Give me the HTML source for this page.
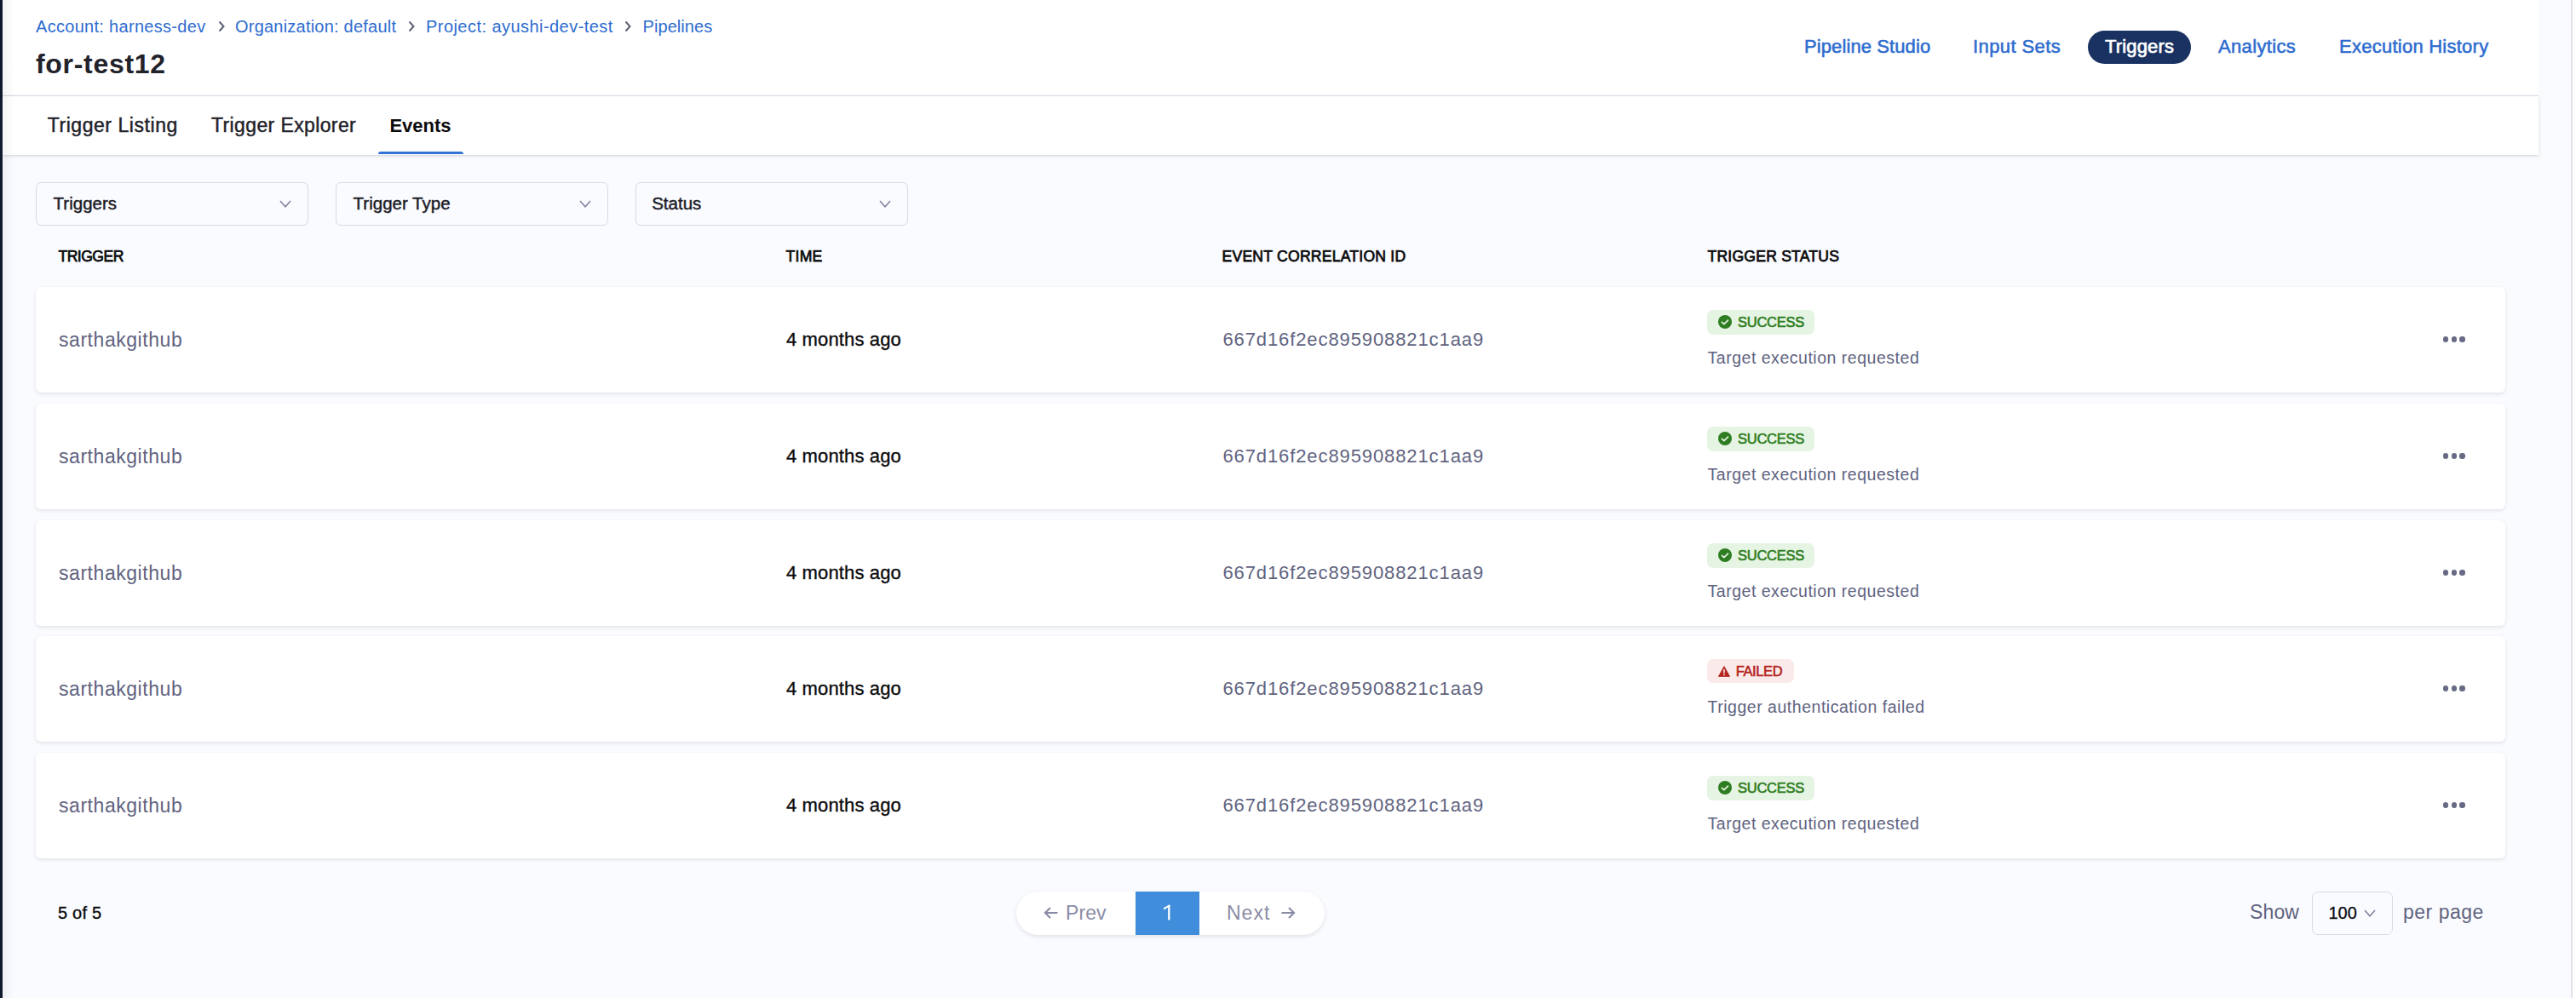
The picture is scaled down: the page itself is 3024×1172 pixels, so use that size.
<!DOCTYPE html>
<html><head><meta charset="utf-8"><title>Events</title>
<style>
html,body{margin:0;padding:0;width:3024px;height:1172px;overflow:hidden;background:#fafbfe;}
body{position:relative;font-family:"Liberation Sans", sans-serif;}
.t{position:absolute;white-space:nowrap;}
.r{position:absolute;}
</style></head><body>
<div class="r" style="left:0px;top:0px;width:3px;height:1172px;background:#0f1a2e;"></div>
<div class="r" style="left:3px;top:0px;width:3015px;height:1172px;background:#fafbfe;"></div>
<div class="r" style="left:3018px;top:0px;width:2px;height:1172px;background:#e1e1ea;"></div>
<div class="r" style="left:3020px;top:0px;width:4px;height:1172px;background:#ffffff;"></div>
<div class="r" style="left:3px;top:0px;width:2977px;height:112px;background:#ffffff;"></div>
<div class="r" style="left:3px;top:112px;width:2977px;height:1px;background:#dcdce8;"></div>
<div class="r" style="left:3px;top:113px;width:2977px;height:69px;background:#ffffff;box-shadow:0 0.5px 1px rgba(40,41,61,0.05), 0 1px 4px rgba(96,97,112,0.2);"></div>
<div class="r" style="left:3px;top:0px;width:14px;height:1172px;background:linear-gradient(90deg, rgba(0,0,0,0.045), rgba(0,0,0,0));"></div>
<div class="t" style="left:42.0px;top:21.1px;font-size:20px;line-height:20px;color:#2e6ccf;letter-spacing:0.3px;">Account: harness-dev</div>
<div class="t" style="left:276.0px;top:21.1px;font-size:20px;line-height:20px;color:#2e6ccf;letter-spacing:0.22px;">Organization: default</div>
<div class="t" style="left:500.0px;top:21.1px;font-size:20px;line-height:20px;color:#2e6ccf;letter-spacing:0.45px;">Project: ayushi-dev-test</div>
<div class="t" style="left:754.6px;top:21.1px;font-size:20px;line-height:20px;color:#2e6ccf;letter-spacing:0.05px;">Pipelines</div>
<svg class="r" style="left:256.3px;top:24.3px" width="8" height="14" viewBox="0 0 8 14"><path d="M1.5 1.5 L6.5 7 L1.5 12.5" fill="none" stroke="#5c6175" stroke-width="2"/></svg>
<svg class="r" style="left:479.3px;top:24.3px" width="8" height="14" viewBox="0 0 8 14"><path d="M1.5 1.5 L6.5 7 L1.5 12.5" fill="none" stroke="#5c6175" stroke-width="2"/></svg>
<svg class="r" style="left:733.3px;top:24.3px" width="8" height="14" viewBox="0 0 8 14"><path d="M1.5 1.5 L6.5 7 L1.5 12.5" fill="none" stroke="#5c6175" stroke-width="2"/></svg>
<div class="t" style="left:42.0px;top:59.3px;font-size:32px;line-height:32px;color:#22222a;font-weight:700;letter-spacing:0.7px;">for-test12</div>
<div class="r" style="left:2451px;top:36px;width:121px;height:39px;background:#193262;border-radius:20px;"></div>
<div class="t" style="left:2118.0px;top:43.8px;font-size:22px;line-height:22px;color:#2e6ccf;letter-spacing:0.1px;-webkit-text-stroke:0.55px #2e6ccf;">Pipeline Studio</div>
<div class="t" style="left:2316.0px;top:43.8px;font-size:22px;line-height:22px;color:#2e6ccf;letter-spacing:0.4px;-webkit-text-stroke:0.55px #2e6ccf;">Input Sets</div>
<div class="t" style="left:2471.0px;top:43.8px;font-size:22px;line-height:22px;color:#ffffff;letter-spacing:0.15px;-webkit-text-stroke:0.7px #ffffff;">Triggers</div>
<div class="t" style="left:2604.0px;top:43.8px;font-size:22px;line-height:22px;color:#2e6ccf;letter-spacing:0.35px;-webkit-text-stroke:0.55px #2e6ccf;">Analytics</div>
<div class="t" style="left:2746.0px;top:43.8px;font-size:22px;line-height:22px;color:#2e6ccf;letter-spacing:0.25px;-webkit-text-stroke:0.55px #2e6ccf;">Execution History</div>
<div class="t" style="left:55.7px;top:136.3px;font-size:23px;line-height:23px;color:#22222a;letter-spacing:0.55px;-webkit-text-stroke:0.45px #22222a;">Trigger Listing</div>
<div class="t" style="left:248.0px;top:136.3px;font-size:23px;line-height:23px;color:#22222a;letter-spacing:0.38px;-webkit-text-stroke:0.45px #22222a;">Trigger Explorer</div>
<div class="t" style="left:457.4px;top:137.0px;font-size:22px;line-height:22px;color:#0b0b0d;font-weight:700;letter-spacing:0.0px;">Events</div>
<div class="r" style="left:444px;top:178px;width:100px;height:3px;background:#3274d6;border-radius:3px 3px 0 0;"></div>
<div class="r" style="left:42px;top:214px;width:320px;height:51px;box-sizing:border-box;border:1.5px solid #d9dae5;border-radius:6px;background:#fafbfe;"></div>
<div class="t" style="left:62.6px;top:228.8px;font-size:20.5px;line-height:20.5px;color:#1c1c28;-webkit-text-stroke:0.45px #1c1c28;">Triggers</div>
<svg class="r" style="left:328px;top:235px" width="14" height="9" viewBox="0 0 14 9"><path d="M1 1 L7.0 7.7 L13 1" fill="none" stroke="#8082a0" stroke-width="1.6"/></svg>
<div class="r" style="left:394px;top:214px;width:320px;height:51px;box-sizing:border-box;border:1.5px solid #d9dae5;border-radius:6px;background:#fafbfe;"></div>
<div class="t" style="left:414.6px;top:228.8px;font-size:20.5px;line-height:20.5px;color:#1c1c28;-webkit-text-stroke:0.45px #1c1c28;">Trigger Type</div>
<svg class="r" style="left:680px;top:235px" width="14" height="9" viewBox="0 0 14 9"><path d="M1 1 L7.0 7.7 L13 1" fill="none" stroke="#8082a0" stroke-width="1.6"/></svg>
<div class="r" style="left:746px;top:214px;width:320px;height:51px;box-sizing:border-box;border:1.5px solid #d9dae5;border-radius:6px;background:#fafbfe;"></div>
<div class="t" style="left:765.2px;top:228.8px;font-size:20.5px;line-height:20.5px;color:#1c1c28;-webkit-text-stroke:0.45px #1c1c28;">Status</div>
<svg class="r" style="left:1032px;top:235px" width="14" height="9" viewBox="0 0 14 9"><path d="M1 1 L7.0 7.7 L13 1" fill="none" stroke="#8082a0" stroke-width="1.6"/></svg>
<div class="t" style="left:68.5px;top:293.2px;font-size:17.6px;line-height:17.6px;color:#0b0b0d;letter-spacing:-0.55px;-webkit-text-stroke:0.75px #0b0b0d;">TRIGGER</div>
<div class="t" style="left:922.5px;top:293.2px;font-size:17.6px;line-height:17.6px;color:#0b0b0d;letter-spacing:0.25px;-webkit-text-stroke:0.75px #0b0b0d;">TIME</div>
<div class="t" style="left:1434.5px;top:293.2px;font-size:17.6px;line-height:17.6px;color:#0b0b0d;letter-spacing:0.22px;-webkit-text-stroke:0.75px #0b0b0d;">EVENT CORRELATION ID</div>
<div class="t" style="left:2004.5px;top:293.2px;font-size:17.6px;line-height:17.6px;color:#0b0b0d;letter-spacing:0.2px;-webkit-text-stroke:0.75px #0b0b0d;">TRIGGER STATUS</div>
<div class="r" style="left:42px;top:337px;width:2899px;height:124px;background:#ffffff;border-radius:6px;box-shadow:0 0 1px rgba(40,41,61,0.06), 0 2px 4px rgba(96,97,112,0.14);"></div>
<div class="t" style="left:69.0px;top:387.8px;font-size:23px;line-height:23px;color:#60637f;letter-spacing:0.55px;">sarthakgithub</div>
<div class="t" style="left:923.0px;top:387.6px;font-size:22px;line-height:22px;color:#0b0b0d;letter-spacing:0.13px;-webkit-text-stroke:0.35px #0b0b0d;">4 months ago</div>
<div class="t" style="left:1435.4px;top:388.4px;font-size:22px;line-height:22px;color:#60637f;letter-spacing:0.9px;">667d16f2ec895908821c1aa9</div>
<div class="r" style="left:2004px;top:364px;width:126px;height:29px;background:#e5f4e3;border-radius:7px;"></div>
<svg class="r" style="left:2017px;top:370px" width="16" height="16" viewBox="0 0 16 16"><circle cx="8" cy="8" r="8" fill="#2f7d22"/><path d="M4.4 8.4 L6.9 10.7 L11.5 6.2" fill="none" stroke="#e5f4e3" stroke-width="1.7" stroke-linecap="round" stroke-linejoin="round"/></svg>
<div class="t" style="left:2040.0px;top:370.0px;font-size:16.5px;line-height:16.5px;color:#2f7d22;letter-spacing:-0.25px;-webkit-text-stroke:0.6px #2f7d22;">SUCCESS</div>
<div class="t" style="left:2004.5px;top:410.5px;font-size:19.5px;line-height:19.5px;color:#60637f;letter-spacing:0.52px;">Target execution requested</div>
<div class="r" style="left:2868.0px;top:395.4px;width:6.4px;height:6.4px;background:#676a84;border-radius:50%;"></div>
<div class="r" style="left:2877.7px;top:395.4px;width:6.4px;height:6.4px;background:#676a84;border-radius:50%;"></div>
<div class="r" style="left:2887.4px;top:395.4px;width:6.4px;height:6.4px;background:#676a84;border-radius:50%;"></div>
<div class="r" style="left:42px;top:474px;width:2899px;height:124px;background:#ffffff;border-radius:6px;box-shadow:0 0 1px rgba(40,41,61,0.06), 0 2px 4px rgba(96,97,112,0.14);"></div>
<div class="t" style="left:69.0px;top:524.8px;font-size:23px;line-height:23px;color:#60637f;letter-spacing:0.55px;">sarthakgithub</div>
<div class="t" style="left:923.0px;top:524.6px;font-size:22px;line-height:22px;color:#0b0b0d;letter-spacing:0.13px;-webkit-text-stroke:0.35px #0b0b0d;">4 months ago</div>
<div class="t" style="left:1435.4px;top:525.4px;font-size:22px;line-height:22px;color:#60637f;letter-spacing:0.9px;">667d16f2ec895908821c1aa9</div>
<div class="r" style="left:2004px;top:501px;width:126px;height:29px;background:#e5f4e3;border-radius:7px;"></div>
<svg class="r" style="left:2017px;top:507px" width="16" height="16" viewBox="0 0 16 16"><circle cx="8" cy="8" r="8" fill="#2f7d22"/><path d="M4.4 8.4 L6.9 10.7 L11.5 6.2" fill="none" stroke="#e5f4e3" stroke-width="1.7" stroke-linecap="round" stroke-linejoin="round"/></svg>
<div class="t" style="left:2040.0px;top:507.0px;font-size:16.5px;line-height:16.5px;color:#2f7d22;letter-spacing:-0.25px;-webkit-text-stroke:0.6px #2f7d22;">SUCCESS</div>
<div class="t" style="left:2004.5px;top:547.5px;font-size:19.5px;line-height:19.5px;color:#60637f;letter-spacing:0.52px;">Target execution requested</div>
<div class="r" style="left:2868.0px;top:532.4px;width:6.4px;height:6.4px;background:#676a84;border-radius:50%;"></div>
<div class="r" style="left:2877.7px;top:532.4px;width:6.4px;height:6.4px;background:#676a84;border-radius:50%;"></div>
<div class="r" style="left:2887.4px;top:532.4px;width:6.4px;height:6.4px;background:#676a84;border-radius:50%;"></div>
<div class="r" style="left:42px;top:611px;width:2899px;height:124px;background:#ffffff;border-radius:6px;box-shadow:0 0 1px rgba(40,41,61,0.06), 0 2px 4px rgba(96,97,112,0.14);"></div>
<div class="t" style="left:69.0px;top:661.8px;font-size:23px;line-height:23px;color:#60637f;letter-spacing:0.55px;">sarthakgithub</div>
<div class="t" style="left:923.0px;top:661.6px;font-size:22px;line-height:22px;color:#0b0b0d;letter-spacing:0.13px;-webkit-text-stroke:0.35px #0b0b0d;">4 months ago</div>
<div class="t" style="left:1435.4px;top:662.4px;font-size:22px;line-height:22px;color:#60637f;letter-spacing:0.9px;">667d16f2ec895908821c1aa9</div>
<div class="r" style="left:2004px;top:638px;width:126px;height:29px;background:#e5f4e3;border-radius:7px;"></div>
<svg class="r" style="left:2017px;top:644px" width="16" height="16" viewBox="0 0 16 16"><circle cx="8" cy="8" r="8" fill="#2f7d22"/><path d="M4.4 8.4 L6.9 10.7 L11.5 6.2" fill="none" stroke="#e5f4e3" stroke-width="1.7" stroke-linecap="round" stroke-linejoin="round"/></svg>
<div class="t" style="left:2040.0px;top:644.0px;font-size:16.5px;line-height:16.5px;color:#2f7d22;letter-spacing:-0.25px;-webkit-text-stroke:0.6px #2f7d22;">SUCCESS</div>
<div class="t" style="left:2004.5px;top:684.5px;font-size:19.5px;line-height:19.5px;color:#60637f;letter-spacing:0.52px;">Target execution requested</div>
<div class="r" style="left:2868.0px;top:669.4px;width:6.4px;height:6.4px;background:#676a84;border-radius:50%;"></div>
<div class="r" style="left:2877.7px;top:669.4px;width:6.4px;height:6.4px;background:#676a84;border-radius:50%;"></div>
<div class="r" style="left:2887.4px;top:669.4px;width:6.4px;height:6.4px;background:#676a84;border-radius:50%;"></div>
<div class="r" style="left:42px;top:747px;width:2899px;height:124px;background:#ffffff;border-radius:6px;box-shadow:0 0 1px rgba(40,41,61,0.06), 0 2px 4px rgba(96,97,112,0.14);"></div>
<div class="t" style="left:69.0px;top:797.8px;font-size:23px;line-height:23px;color:#60637f;letter-spacing:0.55px;">sarthakgithub</div>
<div class="t" style="left:923.0px;top:797.6px;font-size:22px;line-height:22px;color:#0b0b0d;letter-spacing:0.13px;-webkit-text-stroke:0.35px #0b0b0d;">4 months ago</div>
<div class="t" style="left:1435.4px;top:798.4px;font-size:22px;line-height:22px;color:#60637f;letter-spacing:0.9px;">667d16f2ec895908821c1aa9</div>
<div class="r" style="left:2004px;top:774px;width:102px;height:28px;background:#fbeaea;border-radius:7px;"></div>
<svg class="r" style="left:2017px;top:782px" width="14" height="13" viewBox="0 0 14 13"><path d="M7 0.5 L13.6 12.4 L0.4 12.4 Z" fill="#b5231d" stroke="#b5231d" stroke-width="0.8" stroke-linejoin="round"/><rect x="6.2" y="4" width="1.6" height="4.6" fill="#fbeaea"/><rect x="6.2" y="9.6" width="1.6" height="1.6" fill="#fbeaea"/></svg>
<div class="t" style="left:2037.7px;top:780.0px;font-size:16.5px;line-height:16.5px;color:#b5231d;letter-spacing:-0.4px;-webkit-text-stroke:0.6px #b5231d;">FAILED</div>
<div class="t" style="left:2004.5px;top:820.5px;font-size:19.5px;line-height:19.5px;color:#60637f;letter-spacing:0.52px;">Trigger authentication failed</div>
<div class="r" style="left:2868.0px;top:805.4px;width:6.4px;height:6.4px;background:#676a84;border-radius:50%;"></div>
<div class="r" style="left:2877.7px;top:805.4px;width:6.4px;height:6.4px;background:#676a84;border-radius:50%;"></div>
<div class="r" style="left:2887.4px;top:805.4px;width:6.4px;height:6.4px;background:#676a84;border-radius:50%;"></div>
<div class="r" style="left:42px;top:884px;width:2899px;height:124px;background:#ffffff;border-radius:6px;box-shadow:0 0 1px rgba(40,41,61,0.06), 0 2px 4px rgba(96,97,112,0.14);"></div>
<div class="t" style="left:69.0px;top:934.8px;font-size:23px;line-height:23px;color:#60637f;letter-spacing:0.55px;">sarthakgithub</div>
<div class="t" style="left:923.0px;top:934.6px;font-size:22px;line-height:22px;color:#0b0b0d;letter-spacing:0.13px;-webkit-text-stroke:0.35px #0b0b0d;">4 months ago</div>
<div class="t" style="left:1435.4px;top:935.4px;font-size:22px;line-height:22px;color:#60637f;letter-spacing:0.9px;">667d16f2ec895908821c1aa9</div>
<div class="r" style="left:2004px;top:911px;width:126px;height:29px;background:#e5f4e3;border-radius:7px;"></div>
<svg class="r" style="left:2017px;top:917px" width="16" height="16" viewBox="0 0 16 16"><circle cx="8" cy="8" r="8" fill="#2f7d22"/><path d="M4.4 8.4 L6.9 10.7 L11.5 6.2" fill="none" stroke="#e5f4e3" stroke-width="1.7" stroke-linecap="round" stroke-linejoin="round"/></svg>
<div class="t" style="left:2040.0px;top:917.0px;font-size:16.5px;line-height:16.5px;color:#2f7d22;letter-spacing:-0.25px;-webkit-text-stroke:0.6px #2f7d22;">SUCCESS</div>
<div class="t" style="left:2004.5px;top:957.5px;font-size:19.5px;line-height:19.5px;color:#60637f;letter-spacing:0.52px;">Target execution requested</div>
<div class="r" style="left:2868.0px;top:942.4px;width:6.4px;height:6.4px;background:#676a84;border-radius:50%;"></div>
<div class="r" style="left:2877.7px;top:942.4px;width:6.4px;height:6.4px;background:#676a84;border-radius:50%;"></div>
<div class="r" style="left:2887.4px;top:942.4px;width:6.4px;height:6.4px;background:#676a84;border-radius:50%;"></div>
<div class="t" style="left:68.0px;top:1062.1px;font-size:20px;line-height:20px;color:#0b0b0d;letter-spacing:0.2px;-webkit-text-stroke:0.35px #0b0b0d;">5 of 5</div>
<div class="r" style="left:1193px;top:1047px;width:362px;height:51px;background:#ffffff;border-radius:26px;box-shadow:0 2px 5px rgba(96,97,112,0.16);overflow:hidden;"></div>
<div class="r" style="left:1333px;top:1047px;width:75px;height:51px;background:#3f8ddb;"></div>
<svg class="r" style="left:1364px;top:1062px" width="12" height="20" viewBox="0 0 12 20"><path d="M8.3 1 L8.3 18.4" stroke="#ffffff" stroke-width="2.3" fill="none"/><path d="M9.4 1.2 L2 5.4" stroke="#ffffff" stroke-width="2.1" fill="none"/></svg>
<svg class="r" style="left:1225px;top:1064px" width="18" height="16" viewBox="0 0 18 16"><path d="M16.5 8 L2 8 M8 2 L2 8 L8 14" fill="none" stroke="#8a8ca5" stroke-width="2.2"/></svg>
<div class="t" style="left:1251.0px;top:1060.5px;font-size:23px;line-height:23px;color:#8a8ca5;letter-spacing:0.1px;">Prev</div>
<div class="t" style="left:1440.0px;top:1060.5px;font-size:23px;line-height:23px;color:#8a8ca5;letter-spacing:1.0px;">Next</div>
<svg class="r" style="left:1503px;top:1064px" width="18" height="16" viewBox="0 0 18 16"><path d="M1.5 8 L16 8 M10 2 L16 8 L10 14" fill="none" stroke="#8a8ca5" stroke-width="2.2"/></svg>
<div class="t" style="left:2641.0px;top:1059.5px;font-size:23px;line-height:23px;color:#60637f;letter-spacing:0.13px;">Show</div>
<div class="r" style="left:2713.5px;top:1047px;width:95px;height:50.5px;box-sizing:border-box;border:1.5px solid #d9dae5;border-radius:7px;"></div>
<div class="t" style="left:2733.5px;top:1062.1px;font-size:20px;line-height:20px;color:#0b0b0d;-webkit-text-stroke:0.3px #0b0b0d;">100</div>
<svg class="r" style="left:2775px;top:1068px" width="14" height="9" viewBox="0 0 14 9"><path d="M1 1 L7.0 7.7 L13 1" fill="none" stroke="#8082a0" stroke-width="1.6"/></svg>
<div class="t" style="left:2821.0px;top:1059.5px;font-size:23px;line-height:23px;color:#60637f;letter-spacing:0.5px;">per page</div>
</body></html>
